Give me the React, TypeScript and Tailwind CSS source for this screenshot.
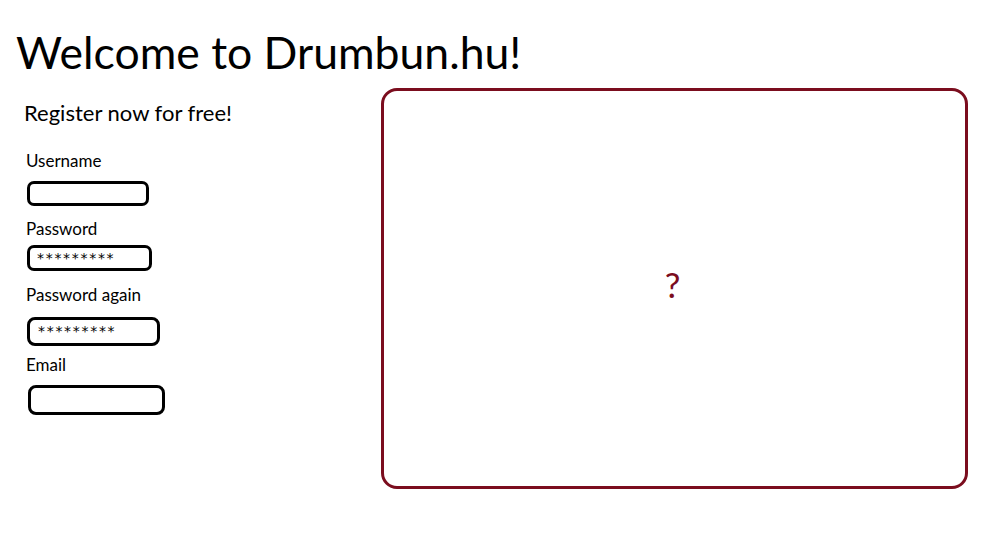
import React from "react";

const dark = "#7b0d1e";

export default function App() {
  return (
    <div className="w-[998px] h-[552px] bg-white overflow-hidden" style={{ fontFamily: "Lato, 'Open Sans', sans-serif" }}>
      <h1 className="text-[44.5px] leading-none text-black pl-[16px] pt-[30px]">Welcome to Drumbun.hu!</h1>
      <div className="flex mt-[13px]">
        <div className="w-[381px] pl-[24px] pt-[12px]">
          <div className="text-[22px] leading-[26px] text-black">Register now for free!</div>
          <div className="mt-[25px] flex flex-col">
            <div>
              <div className="text-[17px] leading-[20px] ml-[2px]">Username</div>
              <div className="w-[122px] h-[25px] mt-[10px] ml-[3px] border-[3px] border-black rounded-[7px]" />
            </div>
            <div className="mt-[13px]">
              <div className="text-[17px] leading-[20px] ml-[2px]">Password</div>
              <div className="w-[125px] h-[26px] mt-[6px] ml-[3px] border-[3px] border-black rounded-[7px] flex items-center pl-[7px] text-[14px] tracking-[1.7px] leading-none" style={{ fontFamily: "'DejaVu Sans', sans-serif" }}>*********</div>
            </div>
            <div className="mt-[14px]">
              <div className="text-[17px] leading-[20px] ml-[2px]">Password again</div>
              <div className="w-[133px] h-[29px] mt-[12px] ml-[3px] border-[3px] border-black rounded-[8px] flex items-center pl-[8px] text-[14px] tracking-[1.7px] leading-none" style={{ fontFamily: "'DejaVu Sans', sans-serif" }}>*********</div>
            </div>
            <div className="mt-[9px]">
              <div className="text-[17px] leading-[20px] ml-[2px]">Email</div>
              <div className="w-[137px] h-[30px] mt-[10px] ml-[4px] border-[3px] border-black rounded-[8px]" />
            </div>
          </div>
        </div>
        <div
          className="w-[587px] h-[401px] border-[3px] rounded-[16px] flex items-center justify-center"
          style={{ borderColor: dark }}
        >
          <span className="text-[35px] leading-none mt-[-8px] ml-[-4px]" style={{ color: dark }}>?</span>
        </div>
      </div>
    </div>
  );
}
